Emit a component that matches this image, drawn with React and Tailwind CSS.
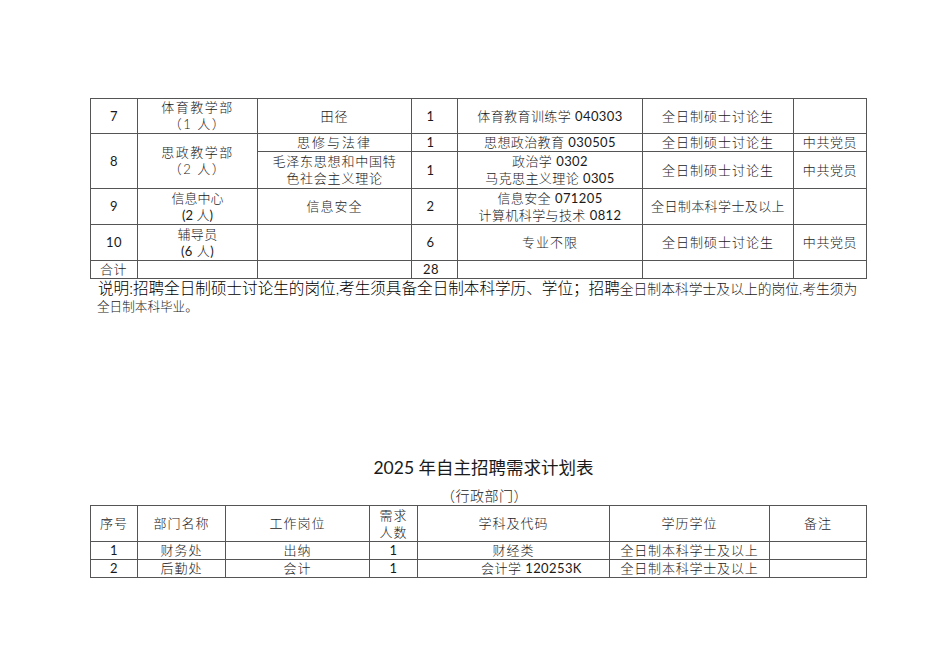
const font = { fontFamily: '"Lato", "Noto Sans CJK SC", sans-serif' };

const topCols = [47, 120, 154, 46, 185, 151, 73];
const bottomCols = [47, 88, 144, 48, 192, 160, 97];

function Cell({ children, className = "", ...rest }) {
  return (
    <td
      className={`border border-[#555] text-center align-middle p-0 text-[13px] leading-[17px] tracking-[0.4px] ${className}`}
      {...rest}
    >
      {children}
    </td>
  );
}

// 数字用常规字重
function N({ children }) {
  return <span className="font-normal">{children}</span>;
}

function Cols({ widths }) {
  return (
    <colgroup>
      {widths.map((w, i) => (
        <col key={i} style={{ width: w }} />
      ))}
    </colgroup>
  );
}

export default function App() {
  return (
    <div className="w-[950px] h-[672px] bg-white text-[#1a1a1a] font-light pl-[90px] pt-[98px]" style={font}>
      {/* 上表 */}
      <table className="table-fixed border-collapse w-[777px]">
        <Cols widths={topCols} />
        <tbody>
          <tr className="h-[35px]">
            <Cell className="font-normal">7</Cell>
            <Cell className="tracking-[1.5px]">
              体育教学部
              <br />
              （1 人）
            </Cell>
            <Cell className="tracking-[1px]">田径</Cell>
            <Cell className="pr-2 font-normal">1</Cell>
            <Cell>
              体育教育训练学 <N>040303</N>
            </Cell>
            <Cell className="tracking-[1px]">全日制硕士讨论生</Cell>
            <Cell />
          </tr>
          <tr className="h-[18px]">
            <Cell rowSpan={2} className="font-normal">
              8
            </Cell>
            <Cell rowSpan={2} className="tracking-[1.5px]">
              思政教学部
              <br />
              （2 人）
            </Cell>
            <Cell className="tracking-[2px]">思修与法律</Cell>
            <Cell className="pr-2 font-normal">1</Cell>
            <Cell>
              思想政治教育 <N>030505</N>
            </Cell>
            <Cell className="tracking-[1px]">全日制硕士讨论生</Cell>
            <Cell className="tracking-[0.6px]">中共党员</Cell>
          </tr>
          <tr className="h-[37px]">
            <Cell className="tracking-[0.8px]">
              毛泽东思想和中国特
              <br />
              色社会主义理论
            </Cell>
            <Cell className="pr-2 font-normal">1</Cell>
            <Cell>
              政治学 <N>0302</N>
              <br />
              马克思主义理论 <N>0305</N>
            </Cell>
            <Cell className="tracking-[1px]">全日制硕士讨论生</Cell>
            <Cell className="tracking-[0.6px]">中共党员</Cell>
          </tr>
          <tr className="h-[36px]">
            <Cell className="font-normal">9</Cell>
            <Cell className="tracking-[0px]">
              信息中心
              <br />
              <N>(2</N> 人<N>)</N>
            </Cell>
            <Cell className="tracking-[1px]">信息安全</Cell>
            <Cell className="pr-2 font-normal">2</Cell>
            <Cell>
              信息安全 <N>071205</N>
              <br />
              计算机科学与技术 <N>0812</N>
            </Cell>
            <Cell>全日制本科学士及以上</Cell>
            <Cell />
          </tr>
          <tr className="h-[36px]">
            <Cell className="font-normal">10</Cell>
            <Cell>
              辅导员
              <br />
              <N>(6</N> 人<N>)</N>
            </Cell>
            <Cell />
            <Cell className="pr-2 font-normal">6</Cell>
            <Cell className="tracking-[1px]">专业不限</Cell>
            <Cell className="tracking-[1px]">全日制硕士讨论生</Cell>
            <Cell className="tracking-[0.6px]">中共党员</Cell>
          </tr>
          <tr className="h-[17px]">
            <Cell className="text-left pl-[9px] leading-[15px]">合计</Cell>
            <Cell />
            <Cell />
            <Cell className="text-left pl-[11px] leading-[15px] font-normal">28</Cell>
            <Cell />
            <Cell />
            <Cell />
          </tr>
        </tbody>
      </table>

      {/* 说明 */}
      <div className="pl-[8px] leading-[16px] pt-[1px] whitespace-nowrap">
        <span className="text-[15.6px] text-black">
          说明:招聘全日制硕士讨论生的岗位,考生须具备全日制本科学历、学位；招聘
        </span>
        <span className="text-[13.8px]">全日制本科学士及以上的岗位,考生须为</span>
      </div>
      <div className="pl-[7px] leading-[20px] text-[12.6px]">全日制本科毕业。</div>

      {/* 标题 */}
      <div className="w-[777px] mt-[139px] pl-[10px] text-center text-[17.5px] font-normal leading-[24px]">
        2025 年自主招聘需求计划表
      </div>
      <div className="w-[777px] mt-[6px] pl-[12px] text-center text-[14px] leading-[19px] tracking-[0.5px]">
        （行政部门）
      </div>

      {/* 下表 */}
      <table className="table-fixed border-collapse w-[777px]">
        <Cols widths={bottomCols} />
        <tbody>
          <tr className="h-[36px]">
            <Cell className="tracking-[1px]">序号</Cell>
            <Cell className="tracking-[1px]">部门名称</Cell>
            <Cell className="tracking-[1px]">工作岗位</Cell>
            <Cell className="tracking-[1px]">
              需求
              <br />
              人数
            </Cell>
            <Cell className="tracking-[1px]">学科及代码</Cell>
            <Cell className="tracking-[1px]">学历学位</Cell>
            <Cell className="tracking-[1px]">备注</Cell>
          </tr>
          <tr className="h-[18px]">
            <Cell className="font-normal">1</Cell>
            <Cell className="tracking-[1px]">财务处</Cell>
            <Cell className="tracking-[1px]">出纳</Cell>
            <Cell className="font-normal">1</Cell>
            <Cell className="tracking-[1px]">财经类</Cell>
            <Cell className="tracking-[0.8px]">全日制本科学士及以上</Cell>
            <Cell />
          </tr>
          <tr className="h-[18px]">
            <Cell className="font-normal">2</Cell>
            <Cell className="tracking-[1px]">后勤处</Cell>
            <Cell className="tracking-[1px]">会计</Cell>
            <Cell className="font-normal">1</Cell>
            <Cell className="pl-[36px]">
              会计学 <N>120253K</N>
            </Cell>
            <Cell className="tracking-[0.8px]">全日制本科学士及以上</Cell>
            <Cell />
          </tr>
        </tbody>
      </table>
    </div>
  );
}
